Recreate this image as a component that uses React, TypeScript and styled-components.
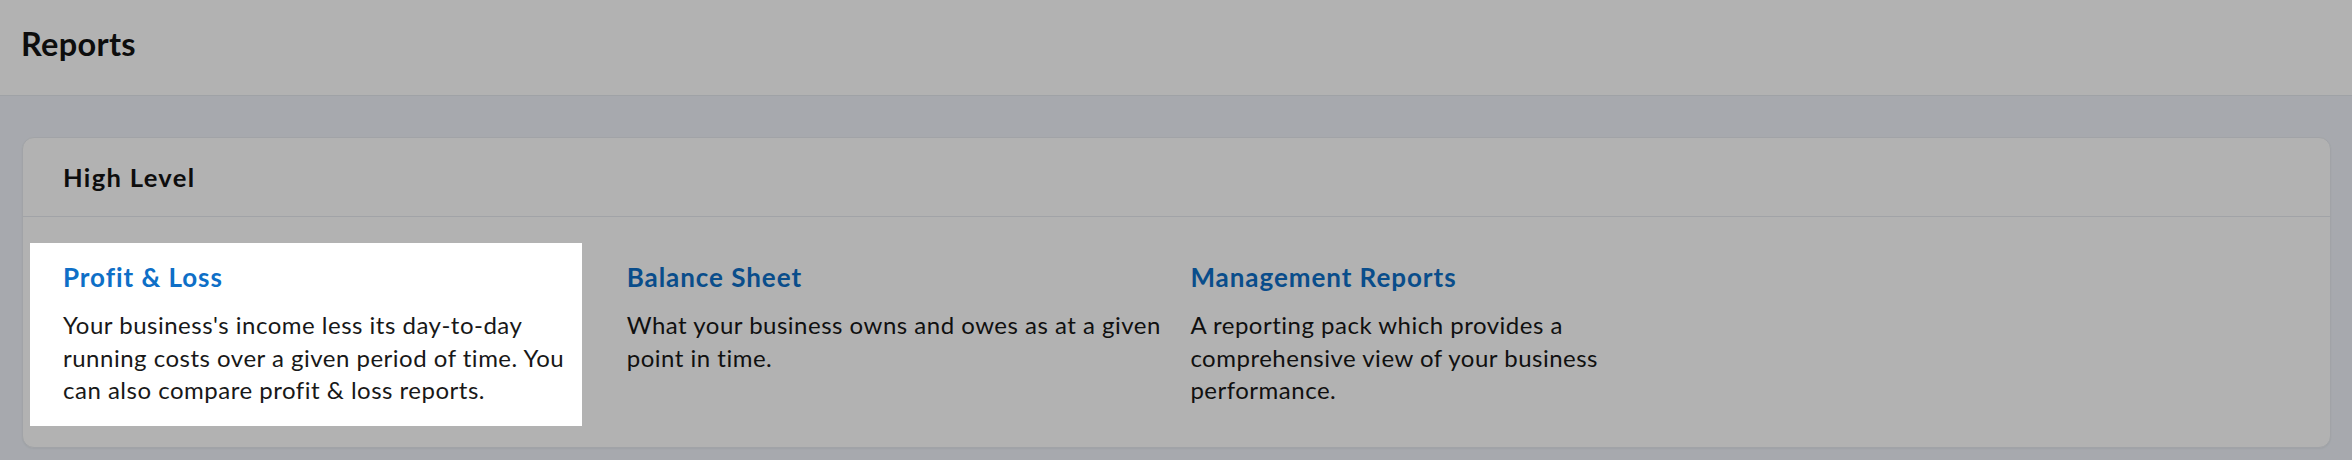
import React from 'react';
import styled, { createGlobalStyle, css } from 'styled-components';

const GlobalStyle = createGlobalStyle`
  html, body {
    margin: 0;
    padding: 0;
    background: #eff3fa;
    font-family: Lato, "Liberation Sans", sans-serif;
    color: #1c1c1c;
  }
  * {
    box-sizing: border-box;
  }
`;

const PageHeader = styled.header`
  height: 96px;
  padding: 24px 21px 0;
  background: #ffffff;
  border-bottom: 1px solid #e4e8ee;
`;

const PageTitle = styled.h1`
  margin: 0;
  font-size: 32.5px;
  line-height: 40px;
  font-weight: 700;
  letter-spacing: 0.3px;
  color: #141414;
`;

const Main = styled.main`
  padding: 41px 21px 13px 22px;
`;

const Card = styled.section`
  background: #ffffff;
  border: 1px solid #e7eaef;
  border-radius: 12px;
  box-shadow: 0 1px 2px rgba(0, 0, 0, 0.05);
`;

const CardHeader = styled.div`
  height: 79px;
  padding: 23px 40px 0;
  border-bottom: 1px solid #e7eaef;
`;

const CardTitle = styled.h2`
  margin: 0;
  font-size: 25.6px;
  line-height: 32px;
  font-weight: 700;
  letter-spacing: 1.3px;
  color: #141414;
`;

const ReportGrid = styled.div`
  display: grid;
  grid-template-columns: repeat(3, 552px);
  column-gap: 11.7px;
  padding: 26px 7px 21px;
`;

const ReportItem = styled.div<{ $highlighted?: boolean }>`
  padding: 17px 0 19px 33px;
  ${(props) =>
    props.$highlighted &&
    css`
      position: relative;
      z-index: 10;
      background: #ffffff;
      box-shadow: 0 0 0 4000px rgba(0, 0, 0, 0.3);
    `}
`;

const ReportLink = styled.a`
  display: block;
  font-size: 26px;
  line-height: 34px;
  font-weight: 700;
  letter-spacing: 0.95px;
  color: #0e6fc7;
  text-decoration: none;
  cursor: pointer;
`;

const ReportDescription = styled.p`
  margin: 15px 0 0;
  font-size: 24px;
  line-height: 32.5px;
  letter-spacing: 0.5px;
  white-space: nowrap;
  color: #181818;
`;

interface IReport {
  title: string;
  lines: string[];
}

const reports: IReport[] = [
  {
    title: 'Profit & Loss',
    lines: [
      "Your business's income less its day-to-day",
      'running costs over a given period of time. You',
      'can also compare profit & loss reports.',
    ],
  },
  {
    title: 'Balance Sheet',
    lines: ['What your business owns and owes as at a given', 'point in time.'],
  },
  {
    title: 'Management Reports',
    lines: ['A reporting pack which provides a', 'comprehensive view of your business', 'performance.'],
  },
];

export default function App() {
  // the tour spotlight sits on the first report
  const spotlight = 0;

  return (
    <>
      <GlobalStyle />
      <PageHeader>
        <PageTitle>Reports</PageTitle>
      </PageHeader>
      <Main>
        <Card>
          <CardHeader>
            <CardTitle>High Level</CardTitle>
          </CardHeader>
          <ReportGrid>
            {reports.map((report, i) => (
              <ReportItem key={report.title} $highlighted={i === spotlight}>
                <ReportLink>{report.title}</ReportLink>
                <ReportDescription>
                  {report.lines.map((line, j) => (
                    <React.Fragment key={j}>
                      {j > 0 && <br />}
                      {line}
                    </React.Fragment>
                  ))}
                </ReportDescription>
              </ReportItem>
            ))}
          </ReportGrid>
        </Card>
      </Main>
    </>
  );
}
